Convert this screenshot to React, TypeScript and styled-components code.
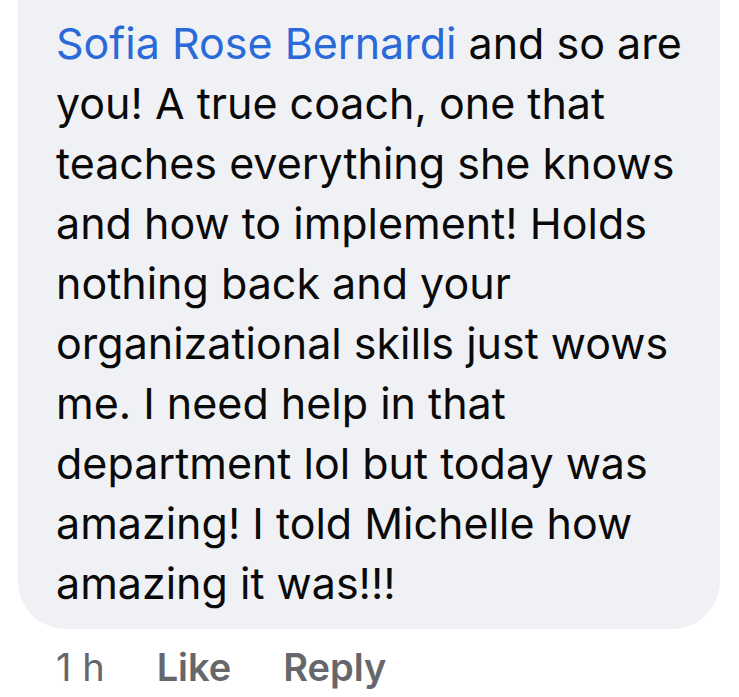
import React from 'react';
import styled, { createGlobalStyle } from 'styled-components';

const GlobalStyle = createGlobalStyle`
  html, body {
    margin: 0;
    padding: 0;
    background: #ffffff;
  }
  body {
    font-family: Inter, "Noto Sans", sans-serif;
  }
`;

const lines = [
  'you! A true coach, one that',
  'teaches everything she knows',
  'and how to implement! Holds',
  'nothing back and your',
  'organizational skills just wows',
  'me. I need help in that',
  'department lol but today was',
  'amazing! I told Michelle how',
  'amazing it was!!!',
];

const App = () => {
  return (
    <Page>
      <GlobalStyle />
      <Bubble>
        <Body>
          <Author>Sofia Rose Bernardi</Author> and so are
          {lines.map((line) => (
            <React.Fragment key={line}>
              <br />
              {line}
            </React.Fragment>
          ))}
        </Body>
      </Bubble>
      <Footer>
        <Time>1 h</Time>
        <Action>Like</Action>
        <Action>Reply</Action>
      </Footer>
    </Page>
  );
};

export default App;

const Page = styled.div`
  width: 739px;
  height: 697px;
  overflow: hidden;
  padding: 0 19px 0 18px;
  box-sizing: border-box;
`;

const Bubble = styled.div`
  background: #f0f1f5;
  border-radius: 0 0 48px 48px;
  padding: 13px 20px 16px 38px;
`;

const Body = styled.div`
  font-size: 43px;
  line-height: 60px;
  color: #0a0a0a;
  white-space: nowrap;
`;

const Author = styled.span`
  color: #2a6ad8;
`;

const Footer = styled.div`
  display: flex;
  align-items: baseline;
  gap: 52px;
  padding: 13px 0 0 38px;
  font-size: 38px;
  line-height: 50px;
  color: #65676b;
`;

const Time = styled.span`
  font-weight: 400;
`;

const Action = styled.span`
  font-weight: 600;
`;
